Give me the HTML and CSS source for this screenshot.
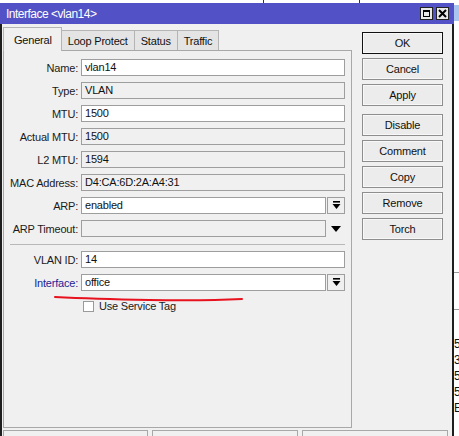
FILE: index.html
```html
<!DOCTYPE html>
<html>
<head>
<meta charset="utf-8">
<link rel="stylesheet" href="styles.css">
</head>
<body>
<div class="top-strip">
  <span class="tick tick-a"></span>
  <span class="tick tick-b"></span>
</div>
<div class="desk">
  <div class="window">
    <div class="titlebar">
      <span class="title">Interface &lt;vlan14&gt;</span>
      <span class="tb-btns">
        <span class="tbtn"><span class="max-box"></span></span>
        <span class="tbtn">
          <svg width="9" height="9" viewBox="0 0 9 9"><path d="M1 1 L8 8 M8 1 L1 8" stroke="#000" stroke-width="2"/></svg>
        </span>
      </span>
    </div>
    <div class="wbody">
      <div class="left">
        <div class="tabs">
          <div class="tab tab-active">General</div>
          <div class="tab">Loop Protect</div>
          <div class="tab">Status</div>
          <div class="tab">Traffic</div>
        </div>
        <div class="panel">
          <div class="row"><label class="lbl">Name:</label><div class="field">vlan14</div></div>
          <div class="row"><label class="lbl">Type:</label><div class="field ro">VLAN</div></div>
          <div class="row"><label class="lbl">MTU:</label><div class="field">1500</div></div>
          <div class="row"><label class="lbl">Actual MTU:</label><div class="field ro">1500</div></div>
          <div class="row"><label class="lbl">L2 MTU:</label><div class="field ro">1594</div></div>
          <div class="row"><label class="lbl">MAC Address:</label><div class="field ro">D4:CA:6D:2A:A4:31</div></div>
          <div class="row"><label class="lbl">ARP:</label><div class="field">enabled</div>
            <div class="ddbtn"><svg width="9" height="9" viewBox="0 0 9 9"><rect x="1" y="0" width="7" height="1.6" fill="#000"/><path d="M0.5 3 H8.5 L4.5 8 Z" fill="#000"/></svg></div>
          </div>
          <div class="row"><label class="lbl">ARP Timeout:</label><div class="field ro"></div>
            <div class="ddplain"><svg width="10" height="6" viewBox="0 0 10 6"><path d="M0 0 H10 L5 6 Z" fill="#000"/></svg></div>
          </div>
          <div class="sep"></div>
          <div class="row"><label class="lbl">VLAN ID:</label><div class="field">14</div></div>
          <div class="row"><label class="lbl lbl-blue">Interface:</label><div class="field">office</div>
            <div class="ddbtn"><svg width="9" height="9" viewBox="0 0 9 9"><rect x="1" y="0" width="7" height="1.6" fill="#000"/><path d="M0.5 3 H8.5 L4.5 8 Z" fill="#000"/></svg></div>
          </div>
          <div class="row row-check"><span class="lbl"></span><span class="check"></span><span class="check-text">Use Service Tag</span></div>
          <svg class="redline" width="194" height="8" viewBox="0 0 194 8"><path d="M1 2 Q 40 4 95 5 T 188 4" fill="none" stroke="#e8121e" stroke-width="2" stroke-linecap="round"/></svg>
        </div>
      </div>
      <div class="buttons">
        <div class="btn btn-default">OK</div>
        <div class="btn">Cancel</div>
        <div class="btn">Apply</div>
        <div class="btn btn-gap">Disable</div>
        <div class="btn">Comment</div>
        <div class="btn">Copy</div>
        <div class="btn">Remove</div>
        <div class="btn">Torch</div>
      </div>
    </div>
    <div class="status">
      <div class="sb"></div>
      <div class="sb"></div>
      <div class="sb"></div>
    </div>
  </div>
  <div class="bg-right">
    <div class="bg-blue"></div>
    <div class="bg-line bg-l1"></div>
    <div class="bg-line bg-l2"></div>
    <div class="bg-rows">
      <div class="bg-cell">5</div>
      <div class="bg-cell">3</div>
      <div class="bg-cell">5</div>
      <div class="bg-cell">5D</div>
      <div class="bg-cell">E</div>
    </div>
  </div>
</div>
</body>
</html>
```
FILE: styles.css
```css
html, body {
  margin: 0;
  padding: 0;
}
body {
  width: 459px;
  height: 436px;
  overflow: hidden;
  background: #ffffff;
  font-family: "Liberation Sans", Arial, sans-serif;
  font-size: 11px;
  letter-spacing: -0.2px;
  color: #111;
}
.top-strip {
  height: 3px;
  display: flex;
  background: #fff;
}
.tick {
  width: 1px;
  height: 3px;
  background: #333;
}
.tick-a { margin-left: 263px; }
.tick-b { margin-left: 95px; }

.desk {
  display: flex;
  align-items: flex-start;
}
.window {
  width: 454px;
  flex: none;
  box-sizing: border-box;
  background: #f0f0f0;
  border-left: 2px solid #1e1e1e;
  border-right: 2px solid #1e1e1e;
  height: 460px;
}
.titlebar {
  height: 21px;
  background: #5252c6;
  display: flex;
  align-items: center;
  justify-content: space-between;
  padding: 0 4px 0 4px;
  margin: 0 -2px 0 -2px;
}
.title {
  color: #fff;
  font-size: 12px;
  letter-spacing: -0.5px;
  padding-left: 2px;
}
.tb-btns {
  display: flex;
  gap: 3px;
  margin-right: 1px;
}
.tbtn {
  width: 13px;
  height: 13px;
  box-sizing: border-box;
  background: #e8e8e8;
  border: 1px solid #222;
  display: flex;
  align-items: center;
  justify-content: center;
}
.max-box {
  width: 7px;
  height: 7px;
  border: 1px solid #000;
  border-top-width: 2px;
  box-sizing: border-box;
}
.wbody {
  display: flex;
  padding-left: 1px;
}
.left {
  width: 349px;
  flex: none;
  margin-right: 10px;
}
.tabs {
  height: 26px;
  display: flex;
  align-items: flex-end;
  position: relative;
  z-index: 1;
}
.tab {
  height: 20px;
  box-sizing: border-box;
  border: 1px solid #b4b4b4;
  border-bottom: none;
  border-left: none;
  background: #e4e4e4;
  padding: 0 6px;
  display: flex;
  align-items: center;
  font-size: 11px;
  color: #111;
}
.tab-active {
  height: 24px;
  margin-bottom: -1px;
  background: #f0f0f0;
  border-left: 1px solid #b4b4b4;
  padding: 0 9px 0 10px;
}
.panel {
  position: relative;
  height: 378px;
  box-sizing: border-box;
  border: 1px solid #a8a8a8;
  padding: 8px 6px 0 0;
  display: flex;
  flex-direction: column;
  gap: 6px;
}
.row {
  display: flex;
  align-items: center;
  height: 17px;
}
.lbl {
  width: 74px;
  flex: none;
  text-align: right;
  margin-right: 3px;
  color: #1a1a1a;
  white-space: nowrap;
}
.lbl-blue {
  color: #1c1c96;
}
.field {
  flex: 1;
  height: 17px;
  box-sizing: border-box;
  border: 1px solid #9e9e9e;
  background: #fff;
  padding-left: 3px;
  line-height: 15px;
  white-space: nowrap;
}
.field.ro {
  background: #f0f0f0;
}
.ddbtn {
  width: 18px;
  height: 17px;
  box-sizing: border-box;
  border: 1px solid #9e9e9e;
  margin-left: 1px;
  background: #f0f0f0;
  display: flex;
  align-items: center;
  justify-content: center;
  flex: none;
}
.ddplain {
  width: 18px;
  margin-left: 1px;
  height: 17px;
  display: flex;
  align-items: center;
  justify-content: center;
  flex: none;
}
.sep {
  height: 1px;
  background: #b8b8b8;
  margin: 1px 0 0 6px;
}
.row-check {
  margin-top: 3px;
  height: 12px;
}
.check {
  width: 11px;
  height: 11px;
  box-sizing: border-box;
  border: 1px solid #9a9a9a;
  background: #fff;
  margin: 0 5px 0 2px;
}
.check-text {
  color: #1a1a1a;
}
.redline {
  position: absolute;
  left: 50px;
  top: 244px;
}
.buttons {
  width: 81px;
  flex: none;
  padding-top: 8px;
  display: flex;
  flex-direction: column;
  gap: 4px;
}
.btn {
  height: 22px;
  box-sizing: border-box;
  border: 1px solid #8e8e8e;
  box-shadow: inset 0 0 0 1px #f8f8f8;
  background: #ececec;
  display: flex;
  align-items: center;
  justify-content: center;
  font-size: 11px;
  color: #111;
}
.btn-default {
  border-color: #111;
}
.btn-gap {
  margin-top: 4px;
}
.status {
  display: flex;
  gap: 4px;
  padding: 2px 3px 0 1px;
}
.sb {
  width: 145px;
  height: 18px;
  box-sizing: border-box;
  border: 1px solid #a8a8a8;
  border-bottom: none;
}
.sb + .sb {
  width: 146px;
}
.bg-right {
  flex: 1;
  height: 433px;
  position: relative;
  background: #fff;
  overflow: hidden;
}
.bg-blue {
  height: 16px;
  margin-top: 2px;
  background: #a9c6ee;
}
.bg-line {
  height: 1px;
  background: #9a9a9a;
}
.bg-l1 {
  margin-top: 251px;
}
.bg-l2 {
  margin-top: 36px;
}
.bg-rows {
  margin-top: 26px;
  display: flex;
  flex-direction: column;
}
.bg-cell {
  height: 16px;
  line-height: 16px;
  font-size: 12px;
  margin-left: -1px;
  border-left: 1px solid #222;
}
```
